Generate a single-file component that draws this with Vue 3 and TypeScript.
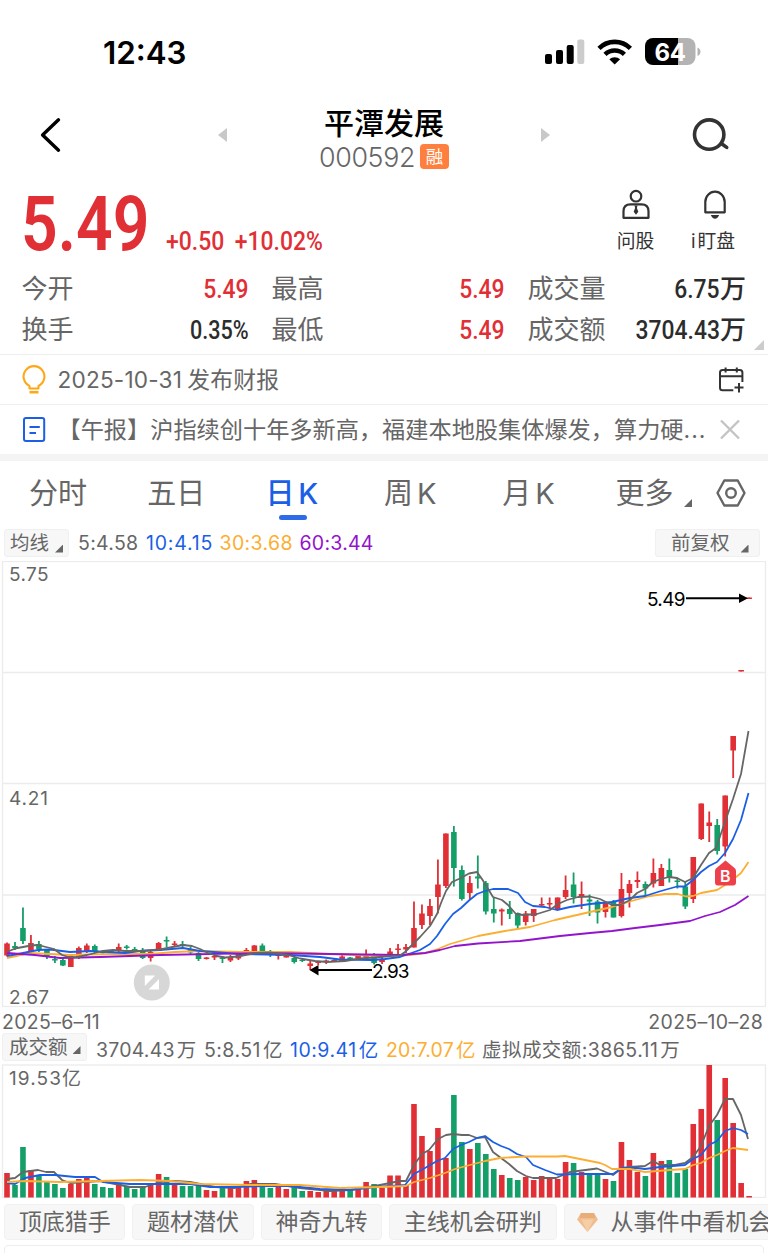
<script setup lang="ts">
type Candle = { x: number; up: boolean; high: number; top: number; bottom: number; low: number }
type Bar = { x: number; up: boolean; top: number }

const STEP = 7.98
const FIRST = 7
const VOLUME_BASE = 1197.5

const xAt = (i: number): number => +(FIRST + i * STEP).toFixed(2)

// direction, high, body top, body bottom, low
const candleRows = `
R 942.5 943.5 955.5 956.5|G 942 946 948 950|G 907.5 928 941 944|R 935 943 951 952|G 941 944 949 952
G 949 949 956 959|G 956 959 960.5 963|G 958 960 965.5 966|R 955 956 967 967|R 946.5 948 957.5 959
R 943.5 945.5 951 953|G 944.5 946 952 953|G 950 952 953 955|G 950 951 952 953|R 943.5 947 950.5 952.5
G 945 946.5 948 949.5|G 947 949 951 952|G 948 950 958 959|R 951 952 958 961.5|R 942 943 951 951
G 936.5 940 941.5 947|R 941 943.5 945 947|G 941 944 946 949|G 947 949 952.5 954|G 950 953 959 961
R 957 957.5 959 959.5|R 955 956 957.5 960|G 956 957.5 959 963|R 955 957 960.5 962|R 952 954 958.5 960
R 948 950 951.5 954|R 945 945.5 951.5 952|G 943.5 945.5 951.5 951.5|G 950 953 954.5 957|R 953.5 955 956 959.5
R 954 956 957.5 957.5|G 956 958 962 963.5|G 958 960 961 962|R 961 963.5 966 970|R 962 962 963 965
R 959.5 960.5 962 964|R 959 960 961 962|R 955 956.5 961 962|G 957 957.5 960 961|R 954 955 958.5 959.5
R 949.5 956 957.5 958.5|G 953 955.5 963 964.5|R 957 959 962 964|R 948 951.5 955 957|R 944 948.5 950 954
R 944 947 949.5 953|R 901.5 928 947.5 947.5|R 904.5 913.5 925 929|R 899 906 916 925|R 859.5 884.5 897 913.5
R 833.5 833.5 886 888|G 826 832 868 886.5|G 865.5 870 899 900.5|R 876 883 893 900|G 855.5 876.5 878.5 888.5
G 881 883 911.5 914.5|G 897 909 913.5 922.5|R 908.5 909.5 911.5 925.5|G 901 909 914 919|G 912.5 913 925.5 928
R 911 913.5 922 925.5|R 909 909 916 922|R 897.5 904 905.5 907|R 897.5 903 904.5 908.5|R 897.5 897.5 909.5 910
R 875.5 890 897 899|G 872.5 884.5 897 903.5|R 881.5 894 896 909|G 894.5 899.5 901.5 916|G 900 901.5 912.5 923.5
R 901.5 902.5 912 917.5|G 900 901.5 917.5 917.5|R 873 889 916 917.5|R 880 884 893 907.5|R 871.5 880 882 888
G 881.5 884 888.5 897|R 858.5 873 883.5 887.5|R 864 868 886 886|G 858.5 870 877.5 882.5|G 877.5 880.5 882 888.5
G 882 886.5 906.5 909|R 857 857 899 903|R 803.5 803.5 839 840|R 811.5 822.5 826 842|G 819 825 851 854.5
R 795.5 795.5 846.5 856.5|R 736 736 750.5 778|R 670 670 671.5 671.5|R 597.5 597.5 599 599`

const candles: Candle[] = candleRows
  .trim()
  .split(/[|\n]/)
  .map((row, i) => {
    const [dir, ...n] = row.trim().split(' ')
    const [high, top, bottom, low] = n.map(Number)
    return { x: xAt(i), up: dir === 'R', high, top, bottom, low }
  })

const volumeTops = [
  1173, 1185, 1147, 1170, 1176, 1182, 1184, 1188, 1184, 1179, 1177, 1184, 1187, 1188, 1184, 1186, 1189, 1187, 1185,
  1174, 1177, 1185, 1186, 1186, 1184, 1190, 1191, 1188, 1188, 1187, 1181, 1180, 1186, 1188, 1186, 1189, 1187, 1191,
  1191, 1192, 1191, 1190, 1188, 1190, 1187, 1182, 1184, 1188, 1175.5, 1175.5, 1185, 1104, 1136, 1151, 1128, 1158,
  1095, 1142, 1149, 1143, 1154, 1169, 1175, 1178, 1180, 1177, 1180, 1176, 1178, 1179, 1162, 1163, 1172, 1174, 1173,
  1179, 1181, 1142, 1160, 1172, 1176, 1153, 1161, 1160, 1173, 1169, 1124, 1109, 1065, 1120, 1078, 1123, 1183, 1196,
]
const volumes: Bar[] = volumeTops.map((top, i) => ({ x: xAt(i), up: candles[i].up, top }))

const priceLines = [
  {
    cls: 'orange',
    pts: '7,958 30,953 70,955 110,954 150,954 175,952 200,951 240,952 290,952 330,954 380,956 410,955 425,953 438,949 450,944 478,936 505,931 530,927 555,920 590,912 612,907 635,900 650,896 665,894 678,894 686,896.5 693,896 701,893 717,890 730,882 741,873 748.5,862',
  },
  {
    cls: 'blue',
    pts: '7,956 23,953 38,950 50,949.5 70,952 90,951 108,952 125,953 140,951 160,950 183,948 200,951 240,954 290,955 320,957 340,959.5 372,960 385,959 400,957 420,950 430,944 437,936 445,924 453,914 461,908 469,900.5 477,894 485,891 493,889 508,889 518,893 525,902 533,906 545,907 557,910 570,907 590,904 612,902 630,898 645,896 661,891 677,886.5 685,886.5 693,880 701,872 709,866 717,862 725,853 733,839 741,820 748.5,793',
  },
  {
    cls: 'purple',
    pts: '7,953 35,955 60,958 100,957 160,955 260,953 330,954 400,955 425,953 440,950 455,946 478,943.5 520,941 560,936 590,933 612,931 635,928 660,925 690,921 705,916 720,912 735,905 748.5,896',
  },
  {
    cls: 'gray',
    pts: '7,952 15,948.5 23,947 31,945.5 38,945 46,947 54,949 62,955 70,957.5 78,957 87,955 95,953 103,951 113,950 125,951 140,951 160,949.5 175,946.5 183,945 192,946 200,949 208,953 217,956 225,957.5 238,956.5 255,953 270,952.5 288,955 300,958.5 315,961 327,962 345,961 360,958.5 375,957.5 390,956 400,955.5 405,952 412,945 420,937 430,926 437,914 441,903 446,891 452,882 460,878.5 469,873.5 477,872 482,879 493,897 502,900 508,905 516,914 523,915 537,914 550,910 558,904 567,900 578,897 590,896.5 600,899 612,905 620,905 630,900 637,893 645,889 653,882 661,879 669,877 677,878 685,882 693,878 701,865 709,853 716,848 725,822 733,799 741,774 748.5,731',
  },
]

const volumeLines = [
  {
    cls: 'gray',
    pts: '7,1179 15,1178 23,1172 38,1170 46,1172 54,1172 62,1180 70,1183 85,1182 100,1181 115,1184 130,1187 145,1187 160,1182 175,1181 190,1182 200,1184 215,1187 235,1188 250,1184 275,1184 300,1188 330,1191 350,1190 375,1186 390,1183 400,1181 406,1181 414,1165 422,1154 429,1150 438,1139 446,1135 453,1134 462,1135 469,1135 477,1138 485,1137 493,1152 501,1158 509,1164 517,1171 526,1176 533,1178 556,1178 570,1172 597,1168.5 613,1175 622,1168 630,1167 645,1166 653,1161 660,1165 675,1165 685,1163 693,1157 701,1146 709,1126 717,1115 725,1099 733,1099 741,1115 748,1139',
  },
  {
    cls: 'blue',
    pts: '7,1183 15,1184 25,1178 40,1175 55,1175 75,1177 95,1177 103,1182 130,1184 165,1184 190,1184 210,1187 235,1187 265,1186 290,1186 320,1189 350,1190 375,1187 405,1185 414,1174 425,1168 437,1161 445,1158 453,1149 461,1145 469,1142 477,1138 485,1136 493,1142 501,1146 509,1149 517,1154 526,1157 533,1165 545,1170 557,1174.5 580,1174 613,1174 622,1168 637,1168 645,1169 660,1167 685,1165 693,1159 701,1155 709,1145 717,1141 725,1131 733,1128 741,1130 748,1134',
  },
  {
    cls: 'orange',
    pts: '7,1182 25,1181 60,1182 100,1181 140,1180 170,1181 200,1184 250,1185 300,1185 340,1188 380,1187 406,1186 414,1182 430,1178 445,1173 455,1169 470,1165 485,1161 500,1158 525,1156.5 557,1156.5 565,1156 580,1159 600,1163 605,1165 612,1169 630,1169 645,1172 670,1170 685,1169 693,1165 701,1163 709,1158 717,1155 725,1151 733,1148 748,1150',
  },
]

const stats = [
  { label: '今开', value: '5.49', unit: '', red: true },
  { label: '最高', value: '5.49', unit: '', red: true },
  { label: '成交量', value: '6.75', unit: '万', red: false },
  { label: '换手', value: '0.35%', unit: '', red: false },
  { label: '最低', value: '5.49', unit: '', red: true },
  { label: '成交额', value: '3704.43', unit: '万', red: false },
]

const tabs = [
  { text: '分时', active: false },
  { text: '五日', active: false },
  { text: '日 K', active: true },
  { text: '周 K', active: false },
  { text: '月 K', active: false },
]

const chips = ['顶底猎手', '题材潜伏', '神奇九转', '主线机会研判']
</script>

<template>
  <div class="screen">
    <header class="status">
      <span class="clock">12:43</span>
      <svg class="status-icons" width="160" height="30" viewBox="542 37 160 30">
        <rect x="545" y="54" width="7" height="10" rx="2" />
        <rect x="556" y="50" width="7" height="14" rx="2" />
        <rect x="566.7" y="45" width="7" height="19" rx="2" />
        <rect x="577.3" y="39.5" width="7" height="24.5" rx="2" fill="#ccc" />
        <g fill="none" stroke="#000" stroke-width="4.6">
          <path d="M599 48.3a22.4 22.4 0 0 1 31.400 0" />
          <path d="M605 54.400a14 14 0 0 1 19.400 0" />
        </g>
        <path d="M609.300 59.300a8 8 0 0 1 10.800 0l-5.400 5.200z" />
        <path d="M653 38h25v27h-25a8 8 0 0 1-8-8V46a8 8 0 0 1 8-8z" />
        <path d="M678 38h9.500a8 8 0 0 1 8 8v11a8 8 0 0 1-8 8H678z" fill="#b3b3b3" />
        <path d="M697.500 47.500c4 1.500 4 7 0 8.500z" fill="#b3b3b3" />
        <text x="654.500" y="60.500" class="batt" textLength="31.500">64</text>
      </svg>
    </header>

    <nav class="nav">
      <svg class="back" width="30" height="40" viewBox="0 0 30 40">
        <path d="M18.500 4.800 2.600 20l15.900 15.200" fill="none" stroke="#000" stroke-width="3.400" stroke-linecap="round" stroke-linejoin="round" />
      </svg>
      <svg width="9" height="14" viewBox="0 0 9 14"><path d="M9 0v14L0 7z" fill="#c8c8c8" /></svg>
      <div class="title">
        <h1>平潭发展</h1>
        <div class="code"><span>000592</span><b>融</b></div>
      </div>
      <svg width="9" height="14" viewBox="0 0 9 14"><path d="M0 0v14l9-7z" fill="#c8c8c8" /></svg>
      <svg class="search" width="40" height="40" viewBox="690 115 40 40">
        <circle cx="709.200" cy="134.600" r="14.700" />
        <path d="M722 144l4.700 3.400" stroke-linecap="round" />
      </svg>
    </nav>

    <section class="quote">
      <div class="price-row">
        <div class="prices">
          <span class="price">5.49</span>
          <span class="change">+0.50 +10.02%</span>
        </div>
        <div class="actions">
          <div class="action">
            <svg width="32" height="32" viewBox="0 0 32 32">
              <circle cx="16" cy="8.200" r="5.300" />
              <path d="M3.500 29.800v-6.500q0-7 7-7h11q7 0 7 7v6.500z" stroke-linejoin="round" />
              <path d="M14.500 17.500h3l-.6 2.500 1.400 3.800-2.300 3-2.300-3L15.100 20z" fill="#333" stroke="none" />
            </svg>
            <span>问股</span>
          </div>
          <div class="action watch">
            <svg width="32" height="32" viewBox="0 0 32 32">
              <path d="M6.300 24.300V14a9.700 10.300 0 0 1 19.400 0v10.300z" stroke-linejoin="round" />
              <path d="M11.800 27h8.400q-1.500 3.700-4.200 3.700T11.800 27z" fill="#333" stroke="none" />
            </svg>
            <span><em>i</em>盯盘</span>
          </div>
        </div>
      </div>
      <div class="stats">
        <div v-for="(s, i) in stats" :key="i" class="stat">
          <span class="label">{{ s.label }}</span>
          <span class="value" :class="{ red: s.red }"><span class="num" :class="{ pct: s.value.endsWith('%') }">{{ s.value }}</span><span v-if="s.unit" class="unit">{{ s.unit }}</span></span>
        </div>
      </div>
      <svg class="corner" width="10" height="10" viewBox="0 0 10 10"><path d="M10 0v10H0z" fill="#ccc" /></svg>
    </section>

    <div class="notice">
      <svg width="26" height="30" viewBox="0 0 26 30" fill="none" stroke="#ffa817" stroke-width="2.100">
        <path d="M8.500 23.500v-2.600a10.400 10.400 0 1 1 9 0v2.600z" stroke-linejoin="round" />
        <path d="M8.500 27.200h9" stroke-width="2.600" />
      </svg>
      <p class="report">2025-10-31<span>发布财报</span></p>
      <svg class="calendar" width="28" height="28" viewBox="718 366 28 28">
        <path d="M743.400 382v-9.500q0-2.500-2.500-2.500h-17.400q-2.500 0-2.500 2.500v15.300q0 2.500 2.500 2.500h10.800M721 376.300h22.400M726.600 367.500v5M737.800 367.500v5M735.500 387.600h9M740 383v9.500" />
      </svg>
    </div>
    <div class="notice news">
      <svg width="26" height="28" viewBox="0 0 26 28" fill="none" stroke="#1b5fe6" stroke-width="2">
        <rect x="3" y="2" width="20.200" height="23" rx="2" />
        <path d="M8.500 11h10.300M8.500 17h6.500" />
      </svg>
      <p>【午报】沪指续创十年多新高，福建本地股集体爆发，算力硬<span class="dots">...</span></p>
      <svg width="22" height="22" viewBox="0 0 22 22" fill="none" stroke="#c4c4c4" stroke-width="2.400">
        <path d="M2 1.500l18 18M20 1.500l-18 18" />
      </svg>
    </div>

    <div class="tabs">
      <span v-for="t in tabs" :key="t.text" class="tab" :class="{ active: t.active }">{{ t.text }}</span>
      <span class="tab more">更多</span>
      <svg class="tick" width="8" height="8" viewBox="0 0 8 8"><path d="M8 0v8H0z" fill="#666" /></svg>
      <svg class="gear" width="30" height="28" viewBox="0 0 30 28" fill="none" stroke="#666" stroke-width="2.400">
        <path d="M8.300 1.500h13.400L28.500 14l-6.800 12.500H8.300L1.500 14z" stroke-linejoin="round" />
        <circle cx="15" cy="14" r="4.800" />
      </svg>
    </div>

    <div class="legend ma">
      <button class="pill">均线<i></i></button>
      <span class="gray m1">5:4.58</span>
      <span class="blue m2">10:4.15</span>
      <span class="orange m3">30:3.68</span>
      <span class="purple m4">60:3.44</span>
      <button class="pill adjust">前复权<i></i></button>
    </div>

    <svg class="chart" width="768" height="447" viewBox="0 561 768 447">
      <g class="grid">
        <rect x="2.500" y="561.500" width="763" height="445" />
        <path d="M2.500 672.500h763M2.500 783.500h763M2.500 895h763" />
      </g>
      <g v-for="(c, i) in candles" :key="i" :class="c.up ? 'up' : 'down'">
        <rect :x="c.x - 0.9" :y="c.high" width="1.8" :height="c.low - c.high" />
        <rect :x="c.x - 2.8" :y="c.top" width="5.6" :height="c.bottom - c.top" />
      </g>
      <polyline v-for="l in priceLines" :key="l.cls" :points="l.pts" class="line" :class="l.cls" />
      <text x="9" y="581" textLength="39.500">5.75</text>
      <text x="9" y="804.500" textLength="39">4.21</text>
      <text x="9" y="1003.800" textLength="40">2.67</text>
      <g class="mark">
        <text x="647" y="605.500" textLength="38.500">5.49</text>
        <path d="M686 598.300h56" />
        <path d="M739 593.500v9.600l9-4.800z" class="head" />
        <text x="372" y="977.500" textLength="37.500">2.93</text>
        <path d="M318 970h54" />
        <path d="M318.500 965v10.400L309.500 970z" class="head" />
      </g>
      <circle cx="151.800" cy="982.500" r="18" fill="#d2d2d2" fill-opacity=".88" />
      <path d="M144.800 975.500h10.400l-10.400 10.400zM159 979v10.400h-10.400z" fill="#fff" />
      <path d="M725.500 860.500l9 7.500q1.500 1 1.500 3v11.500q0 3-3 3h-15q-3 0-3-3V871q0-2 1.500-3z" fill="#ee4048" />
      <text x="725.300" y="881.500" class="buy">B</text>
    </svg>

    <div class="dates"><span>2025–6–11</span><span>2025–10–28</span></div>

    <div class="legend vol">
      <button class="pill">成交额<i></i></button>
      <span class="gray v1">3704.43<u>万</u></span>
      <span class="gray v2">5:8.51<u>亿</u></span>
      <span class="blue v3">10:9.41<u>亿</u></span>
      <span class="orange v4">20:7.07<u>亿</u></span>
      <span class="gray v5">虚拟成交额:3865.11<u>万</u></span>
    </div>

    <svg class="chart" width="768" height="134" viewBox="0 1064 768 134">
      <rect class="frame" x="2.500" y="1065" width="763" height="132.500" />
      <rect v-for="(b, i) in volumes" :key="i" :class="b.up ? 'up' : 'down'" :x="b.x - 2.8" :y="b.top" width="5.6" :height="VOLUME_BASE - b.top" />
      <polyline v-for="l in volumeLines" :key="l.cls" :points="l.pts" class="line" :class="l.cls" />
      <text x="9" y="1085" textLength="72">19.53亿</text>
    </svg>

    <div class="chips">
      <span v-for="c in chips" :key="c" class="chip">{{ c }}</span>
      <span class="chip event">
        <svg width="21" height="19" viewBox="0 0 21 19">
          <path d="M4 0h13l4 6.500L10.500 19 0 6.500z" fill="#f0bd8e" />
          <path d="M4 0h13l1.500 5h-16z" fill="#e9ad78" />
          <path d="M4.500 6.500h12L10.500 19z" fill="#f5cda6" />
        </svg>
        从事件中看机会
      </span>
    </div>
    <div class="card"></div>
  </div>
</template>

<style>
html,
body {
  margin: 0;
  background: #fff;
  overflow: hidden;
}
</style>

<style scoped>
.screen {
  width: 768px;
  height: 1253px;
  overflow: hidden;
  background: #fff;
  color: #666;
  font-family: Inter, 'Noto Sans CJK SC', sans-serif;
  display: flex;
  flex-direction: column;
}
.screen > * {
  flex: none;
  box-sizing: border-box;
}
svg {
  display: block;
  flex: none;
}
em {
  font-style: normal;
  margin-right: 2px;
}
u {
  text-decoration: none;
  margin-left: 2px;
}
.status {
  height: 100px;
  padding: 37px 0 0 103px;
  display: flex;
  justify-content: space-between;
}
.clock {
  font-size: 31.300px;
  line-height: 32px;
  font-weight: 600;
  color: #000;
}
.status-icons {
  margin-right: 66px;
}
.batt {
  font-size: 24px;
  font-weight: 700;
  fill: #fff;
}
.nav {
  height: 80px;
  display: grid;
  grid-template-columns: 218px 9px 1fr 9px 218px;
  grid-template-rows: 70px;
  align-items: center;
}
.back {
  margin-left: 40px;
}
.title {
  display: flex;
  flex-direction: column;
  align-items: center;
  height: 70px;
  box-sizing: border-box;
  padding-top: 5px;
}
h1 {
  margin: 0;
  font-size: 30px;
  line-height: 36px;
  font-weight: 500;
  color: #000;
}
.code {
  display: flex;
  align-items: center;
  gap: 5px;
  height: 31px;
}
.code span {
  font-size: 26.800px;
  font-weight: 300;
  letter-spacing: -0.350px;
}
.code b {
  width: 29px;
  height: 25px;
  border-radius: 4px;
  background: #ff7f3e;
  color: #fff;
  font-size: 17.500px;
  line-height: 25px;
  font-weight: 400;
  text-align: center;
}
.search {
  margin-left: 140px;
  fill: none;
  stroke: #333;
  stroke-width: 3.600px;
}
.quote {
  height: 174px;
  position: relative;
}
.price-row {
  height: 89px;
  display: flex;
  justify-content: space-between;
}
.prices {
  display: flex;
  align-items: baseline;
  color: #e12f36;
  font-family: Roboto, sans-serif;
  padding-left: 21px;
  line-height: 89px;
  height: 89px;
}
.price {
  font-size: 76.500px;
  font-weight: 600;
  width: 145px;
  transform: scaleX(0.840);
  transform-origin: left;
  white-space: nowrap;
}
.change {
  font-size: 26px;
  font-weight: 500;
  word-spacing: 5.500px;
  transform: scaleX(0.882);
  transform-origin: left;
}
.actions {
  display: flex;
  padding: 8px 14px 0 0;
}
.action {
  width: 79px;
  display: flex;
  flex-direction: column;
  align-items: center;
  font-size: 18.800px;
  line-height: 24px;
  gap: 10px;
  color: #333;
}
.action svg {
  fill: none;
  stroke: #333;
  stroke-width: 2.200px;
}
.watch span {
  margin-right: 3px;
}
.stats {
  display: grid;
  grid-template-columns: 227px 233px 218.500px;
  grid-auto-rows: 41px;
  column-gap: 23px;
  padding-left: 21.500px;
}
.stat {
  display: flex;
  justify-content: space-between;
  line-height: 40px;
}
.label {
  font-size: 26px;
}
.value {
  display: flex;
  color: #2c2c2c;
  font-size: 26px;
  font-weight: 500;
  font-family: Roboto, 'Noto Sans CJK SC', sans-serif;
}
.num {
  transform: scaleX(0.880);
  transform-origin: right;
}
.num.pct {
  transform: scaleX(0.830);
}
.red {
  color: #e12f36;
}
.corner {
  position: absolute;
  right: 4px;
  bottom: 4px;
}
.notice {
  height: 50px;
  border-top: 1px solid #eee;
  display: flex;
  align-items: center;
  padding: 0 23px 0 21px;
}
.notice p {
  margin: 0 auto 0 10.500px;
  font-size: 23.200px;
  line-height: 48px;
  white-space: nowrap;
}
.notice .report {
  font-size: 22.600px;
  letter-spacing: 0.200px;
  padding-top: 1px;
}
.report span {
  font-size: 22.800px;
  margin-left: 5px;
}
.dots {
  letter-spacing: 0.900px;
}
.calendar {
  fill: none;
  stroke: #333;
  stroke-width: 2px;
}
.news {
  padding-right: 27px;
}
.tabs {
  height: 72px;
  border-top: 7px solid #f4f4f4;
  display: flex;
  align-items: center;
  padding: 0 0 1px 29px;
  font-size: 29px;
}
.tab {
  width: 118.300px;
  line-height: 60px;
  padding-top: 2px;
  box-sizing: border-box;
  white-space: nowrap;
  word-spacing: -4px;
}
.tab.active {
  color: #1b5fe6;
  font-weight: 500;
  position: relative;
}
.tab.active::after {
  content: '';
  position: absolute;
  left: 13px;
  bottom: 4.500px;
  width: 28px;
  height: 5px;
  border-radius: 3px;
  background: #2f6be8;
}
.tab.more {
  width: auto;
  margin-left: -5px;
}
.tick {
  margin: 20px 0 0 10px;
}
.gear {
  margin-left: 24px;
}
.legend {
  display: flex;
  align-items: center;
  font-size: 19.500px;
  white-space: nowrap;
}
.legend span {
  flex: none;
}
.ma {
  height: 35px;
  padding: 0 8px 1px 4px;
}
.pill {
  appearance: none;
  box-sizing: border-box;
  border: 1px solid #f0f0f0;
  border-radius: 3px;
  background: #f7f7f7;
  height: 28px;
  padding: 0 5px;
  display: flex;
  align-items: center;
  font: inherit;
  line-height: 26px;
  color: #666;
}
.pill i {
  width: 8px;
  height: 8px;
  margin: 11px 0 0 6px;
  background: #666;
  clip-path: polygon(100% 0, 100% 100%, 0 100%);
}
.m1 {
  margin-left: 9px;
  width: 68px;
  letter-spacing: 0.300px;
}
.m2 {
  width: 73.500px;
  letter-spacing: 0.800px;
}
.m3 {
  width: 80px;
  letter-spacing: 0.350px;
}
.m4 {
  letter-spacing: 0.250px;
}
.adjust {
  margin-left: auto;
  width: 105px;
  padding-left: 15px;
}
.adjust i {
  margin-left: 11px;
}
.gray {
  color: #666;
}
.blue {
  color: #1b5fe6;
}
.orange {
  color: #fdae32;
}
.purple {
  color: #9214cc;
}
.chart {
  overflow: hidden;
}
.chart text {
  font-size: 19px;
  fill: #666;
}
.grid,
.frame {
  fill: none;
  stroke: #ececec;
  stroke-width: 1.300px;
}
.up {
  fill: #e12f36;
}
.down {
  fill: #149e68;
}
.line {
  fill: none;
  stroke: currentColor;
  stroke-width: 1.800px;
  stroke-linejoin: round;
}
.mark path {
  stroke: #000;
  stroke-width: 2px;
}
.mark .head {
  stroke: none;
}
.chart .mark text {
  fill: #000;
}
.chart .buy {
  fill: #fff;
  font-size: 16px;
  font-weight: 600;
  text-anchor: middle;
}
.dates {
  height: 25px;
  display: flex;
  justify-content: space-between;
  padding: 2px 5px 0 2px;
  font-size: 19.500px;
  letter-spacing: 0.300px;
  line-height: 24px;
}
.vol {
  height: 31px;
  padding: 0 0 0 2px;
}
.vol .pill {
  width: 85px;
  padding: 0 0 0 6px;
  margin-top: -3px;
}
.vol .pill i {
  margin-left: 5px;
  margin-top: 6px;
}
.v1 {
  margin-left: 9px;
  width: 108px;
  letter-spacing: 0.200px;
}
.v2 {
  width: 86px;
  letter-spacing: 0.450px;
}
.v3 {
  width: 96px;
  letter-spacing: 0.500px;
}
.v4 {
  width: 96px;
  letter-spacing: 0.200px;
}
.v5 {
  letter-spacing: 0.450px;
}
.chips {
  display: flex;
  gap: 7px;
  padding: 6px 0 0 4px;
  height: 47px;
}
.chip {
  flex: none;
  box-sizing: border-box;
  height: 36px;
  border: 1px solid #f1f1f1;
  border-radius: 4px;
  background: #f7f7f7;
  padding: 0 13.700px;
  font-size: 23px;
  line-height: 34px;
  white-space: nowrap;
}
.event {
  display: flex;
  align-items: center;
  gap: 13px;
  padding-left: 12px;
}
.card {
  height: 20px;
  margin: 0 4px;
  border: 1px solid #eee;
  border-radius: 4px;
}
</style>
